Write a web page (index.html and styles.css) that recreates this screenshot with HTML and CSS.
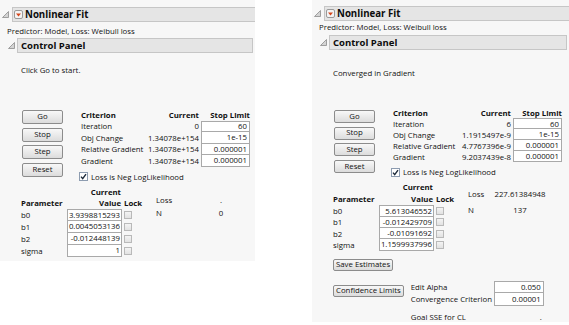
FILE: index.html
```html
<!DOCTYPE html>
<html lang="en">
<head>
    <meta charset="UTF-8" />
    <meta name="viewport" content="width=device-width, initial-scale=1.0" />
    <title>Nonlinear Fit</title>
    <link rel="stylesheet" href="styles.css">
</head>
<body>
    <div class="report left">
        <div class="outline top">
            <svg class="tri" width="7" height="7" viewBox="0 0 7 7"><polygon points="6.5,0.5 6.5,6.5 0.5,6.5" fill="#d4d4d4" stroke="#8c8c8c" stroke-width="0.8"/></svg>
            <div class="bar">
                <svg class="hot" width="9" height="9" viewBox="0 0 9 9"><rect x="0.5" y="0.5" width="8" height="8" rx="1.5" fill="#f4f4f4" stroke="#9a9a9a"/><polygon points="2,3.5 7,3.5 4.5,6.5" fill="#d5461c"/></svg>
                Nonlinear Fit
            </div>
        </div>
        <div class="note">Predictor: Model, Loss: Weibull loss</div>
        <div class="outline sub">
            <svg class="tri" width="7" height="7" viewBox="0 0 7 7"><polygon points="6.5,0.5 6.5,6.5 0.5,6.5" fill="#d4d4d4" stroke="#8c8c8c" stroke-width="0.8"/></svg>
            <div class="bar">Control Panel</div>
        </div>
        <div class="panel">
            <div class="status">Click Go to start.</div>
            <div class="controls">
                <div class="buttons">
                    <button>Go</button>
                    <button>Stop</button>
                    <button>Step</button>
                    <button>Reset</button>
                </div>
                <div class="criteria">
                    <div class="crit-grid">
                        <span class="th">Criterion</span><span class="th num">Current</span><span class="th num">Stop Limit</span>
                        <span>Iteration</span><span class="num">0</span><span class="box first">60</span>
                        <span>Obj Change</span><span class="num">1.34078e+154</span><span class="box">1e-15</span>
                        <span>Relative Gradient</span><span class="num">1.34078e+154</span><span class="box">0.000001</span>
                        <span>Gradient</span><span class="num">1.34078e+154</span><span class="box">0.000001</span>
                    </div>
                    <div class="check">
                        <svg class="cb-on" width="9" height="9" viewBox="0 0 9 9"><rect x="0.5" y="0.5" width="8" height="8" fill="#fff" stroke="#8d9cb0"/><path d="M2 4.6 L3.7 6.6 L7 2.2" fill="none" stroke="#1d2a3a" stroke-width="1.4"/></svg>
                        Loss is Neg LogLikelihood
                    </div>
                </div>
            </div>
            <div class="estimates">
                <div class="param-grid">
                    <span></span><span class="th num pad">Current</span><span></span>
                    <span class="th">Parameter</span><span class="th num pad">Value</span><span class="th">Lock</span>
                    <span>b0</span><span class="box first">3.9398815293</span><span class="cb"></span>
                    <span>b1</span><span class="box">0.0045053136</span><span class="cb"></span>
                    <span>b2</span><span class="box">-0.012448139</span><span class="cb"></span>
                    <span>sigma</span><span class="box">1</span><span class="cb"></span>
                </div>
                <div class="stats">
                    <span>Loss</span><span class="val">.</span>
                    <span>N</span><span class="val">0</span>
                </div>
            </div>
        </div>
    </div>

    <div class="report right">
        <div class="outline top">
            <svg class="tri" width="7" height="7" viewBox="0 0 7 7"><polygon points="6.5,0.5 6.5,6.5 0.5,6.5" fill="#d4d4d4" stroke="#8c8c8c" stroke-width="0.8"/></svg>
            <div class="bar">
                <svg class="hot" width="9" height="9" viewBox="0 0 9 9"><rect x="0.5" y="0.5" width="8" height="8" rx="1.5" fill="#f4f4f4" stroke="#9a9a9a"/><polygon points="2,3.5 7,3.5 4.5,6.5" fill="#d5461c"/></svg>
                Nonlinear Fit
            </div>
        </div>
        <div class="note">Predictor: Model, Loss: Weibull loss</div>
        <div class="outline sub">
            <svg class="tri" width="7" height="7" viewBox="0 0 7 7"><polygon points="6.5,0.5 6.5,6.5 0.5,6.5" fill="#d4d4d4" stroke="#8c8c8c" stroke-width="0.8"/></svg>
            <div class="bar">Control Panel</div>
        </div>
        <div class="panel">
            <div class="status">Converged in Gradient</div>
            <div class="controls">
                <div class="buttons">
                    <button>Go</button>
                    <button>Stop</button>
                    <button>Step</button>
                    <button>Reset</button>
                </div>
                <div class="criteria">
                    <div class="crit-grid">
                        <span class="th">Criterion</span><span class="th num">Current</span><span class="th num">Stop Limit</span>
                        <span>Iteration</span><span class="num">6</span><span class="box first">60</span>
                        <span>Obj Change</span><span class="num">1.1915497e-9</span><span class="box">1e-15</span>
                        <span>Relative Gradient</span><span class="num">4.7767396e-9</span><span class="box">0.000001</span>
                        <span>Gradient</span><span class="num">9.2037439e-8</span><span class="box">0.000001</span>
                    </div>
                    <div class="check">
                        <svg class="cb-on" width="9" height="9" viewBox="0 0 9 9"><rect x="0.5" y="0.5" width="8" height="8" fill="#fff" stroke="#8d9cb0"/><path d="M2 4.6 L3.7 6.6 L7 2.2" fill="none" stroke="#1d2a3a" stroke-width="1.4"/></svg>
                        Loss is Neg LogLikelihood
                    </div>
                </div>
            </div>
            <div class="estimates">
                <div class="param-grid">
                    <span></span><span class="th num pad">Current</span><span></span>
                    <span class="th">Parameter</span><span class="th num pad">Value</span><span class="th">Lock</span>
                    <span>b0</span><span class="box first">5.613046552</span><span class="cb"></span>
                    <span>b1</span><span class="box">-0.012429709</span><span class="cb"></span>
                    <span>b2</span><span class="box">-0.01091692</span><span class="cb"></span>
                    <span>sigma</span><span class="box">1.1599937996</span><span class="cb"></span>
                </div>
                <div class="stats">
                    <span>Loss</span><span class="val">227.61384948</span>
                    <span>N</span><span class="val">137</span>
                </div>
            </div>
            <button class="wide save">Save Estimates</button>
            <div class="limits">
                <button class="wide">Confidence Limits</button>
                <div class="limit-grid">
                    <span>Edit Alpha</span><span class="box first">0.050</span>
                    <span>Convergence Criterion</span><span class="box">0.00001</span>
                    <span class="last">Goal SSE for CL</span><span class="plain last">.</span>
                </div>
            </div>
        </div>
    </div>
</body>
</html>
```

FILE: styles.css
```css
body {
    margin: 0;
    display: flex;
    gap: 57px;
    background: #ffffff;
    font-family: "Open Sans", "DejaVu Sans", sans-serif;
    font-size: 7.8px;
    color: #111;
    white-space: nowrap;
}
.report {
    background: #f7f7f7;
    display: flex;
    flex-direction: column;
    box-sizing: border-box;
}
.report.left {
    width: 255px;
    height: 261px;
}
.report.right {
    width: 257px;
    height: 322px;
}
.outline {
    display: flex;
    align-items: center;
}
.outline .bar {
    flex: 1;
    height: 15px;
    box-sizing: border-box;
    background: #e5e5e5;
    border: 1px solid #c6c6c6;
    display: flex;
    align-items: center;
    font-weight: bold;
    font-size: 9.5px;
    color: #0c0c0c;
}
.outline.top {
    margin-top: 7px;
}
.outline.top .tri {
    margin: 0 3px 0 2px;
}
.outline.top .bar {
    padding-left: 1px;
    border-right: none;
    font-size: 9.7px;
}
.hot {
    margin-right: 2px;
}
.note {
    height: 10px;
    line-height: 10px;
    margin: 4px 0 0 7px;
}
.outline.sub {
    margin: 2px 2px 0 0;
}
.outline.sub .tri {
    margin: 0 2px 0 8px;
}
.outline.sub .bar {
    padding-left: 3px;
}
.panel {
    padding-left: 21px;
    display: flex;
    flex-direction: column;
    align-items: flex-start;
}
.status {
    height: 10px;
    line-height: 10px;
    margin-top: 12px;
}
.controls {
    display: flex;
    gap: 18px;
    margin-top: 35px;
}
.buttons {
    display: flex;
    flex-direction: column;
    gap: 3.5px;
    padding-left: 1px;
}
button {
    font-family: inherit;
    font-size: 7.8px;
    color: #111;
    padding: 0 4px;
    box-sizing: border-box;
    background: linear-gradient(#f8f8f8, #dcdcdc);
    border: 1px solid #8c8c8c;
    border-radius: 2px;
    line-height: 1;
    white-space: nowrap;
}
.buttons button {
    width: 41px;
    height: 14px;
}
.crit-grid {
    display: grid;
    grid-template-columns: 62px 54px 49px;
    grid-template-rows: 10.5px repeat(4, 11.5px);
    column-gap: 2px;
    align-items: center;
}
.th {
    font-weight: bold;
}
.num {
    text-align: right;
}
.pad {
    padding-right: 1px;
}
.box {
    align-self: stretch;
    background: #ffffff;
    border: 1px solid #a9a9a9;
    border-top: none;
    padding-right: 2px;
    display: flex;
    align-items: center;
    justify-content: flex-end;
}
.box.first {
    border-top: 1px solid #a9a9a9;
}
.check {
    display: flex;
    align-items: center;
    gap: 3px;
    height: 10px;
    margin: 5px 0 0 -2px;
}
.estimates {
    display: flex;
    gap: 13px;
    margin-top: 5px;
}
.param-grid {
    display: grid;
    grid-template-columns: 44px 55px 19px;
    grid-template-rows: 10px 12px repeat(4, 12px);
    column-gap: 2px;
    align-items: center;
}
.param-grid .box {
    padding-right: 1px;
}
.cb {
    width: 8px;
    height: 8px;
    box-sizing: border-box;
    border: 1px solid #b9b9b9;
    background: linear-gradient(#f4f4f4, #e2e2e2);
}
.stats {
    display: grid;
    grid-template-columns: 45px 40px;
    grid-auto-rows: 13px;
    align-items: center;
    margin-top: 7px;
}
.stats .val {
    text-align: center;
}

/* second capture is a touch tighter vertically */
.right .outline.top {
    margin-top: 6px;
}
.right .note {
    margin-top: 1px;
}
.right .outline.sub {
    margin-top: 3px;
}
.right .status {
    margin-top: 18px;
}
.right .controls {
    margin-top: 32px;
}
.right .buttons {
    gap: 3.7px;
}
.right .buttons button {
    height: 13px;
}
.right .criteria {
    margin-top: -3px;
}
.right .crit-grid {
    grid-template-rows: 11px repeat(4, 11.1px);
}
.right .check {
    margin-top: 5px;
}
.right .param-grid {
    grid-template-rows: 10px 13px repeat(4, 11.3px);
}
.right .stats {
    grid-template-columns: 16px 68px;
    column-gap: 2px;
    grid-auto-rows: 16px;
    margin-top: 4px;
}
.wide {
    height: 12px;
    padding: 0 2px;
}
.save {
    margin-top: 8px;
}
.limits {
    display: flex;
    align-items: flex-start;
    gap: 7px;
    margin-top: 10px;
}
.limits .wide {
    margin-top: 4px;
}
.limit-grid {
    display: grid;
    grid-template-columns: 81px 50px;
    grid-template-rows: 12px 13px 17px;
    column-gap: 2px;
    align-items: center;
}
.limit-grid .last {
    align-self: end;
    line-height: 11px;
}
.plain {
    text-align: right;
    padding-right: 2px;
}
```
